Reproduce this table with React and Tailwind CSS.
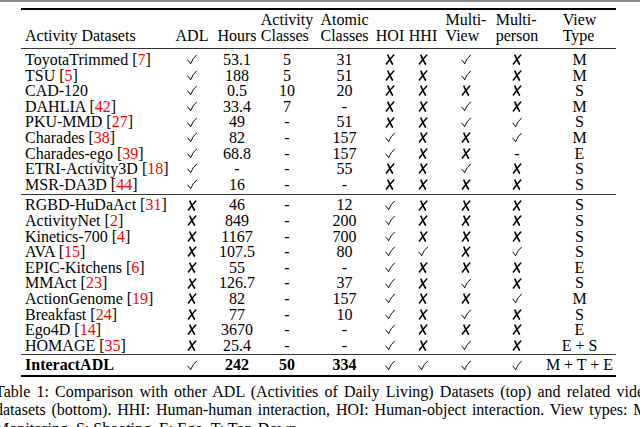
import React from 'react'

const Y = 'yes'
const N = 'no'

const top = [
  ['ToyotaTrimmed', '7', Y, '53.1', '5', '31', N, N, Y, N, 'M'],
  ['TSU', '5', Y, '188', '5', '51', N, N, Y, N, 'M'],
  ['CAD-120', null, Y, '0.5', '10', '20', N, N, N, N, 'S'],
  ['DAHLIA', '42', Y, '33.4', '7', '-', N, N, Y, N, 'M'],
  ['PKU-MMD', '27', Y, '49', '-', '51', N, N, Y, Y, 'S'],
  ['Charades', '38', Y, '82', '-', '157', Y, N, N, Y, 'M'],
  ['Charades-ego', '39', Y, '68.8', '-', '157', Y, N, N, '-', 'E'],
  ['ETRI-Activity3D', '18', Y, '-', '-', '55', N, N, Y, N, 'S'],
  ['MSR-DA3D', '44', Y, '16', '-', '-', N, N, N, N, 'S'],
]

const bottom = [
  ['RGBD-HuDaAct', '31', N, '46', '-', '12', Y, N, N, N, 'S'],
  ['ActivityNet', '2', N, '849', '-', '200', Y, N, N, N, 'S'],
  ['Kinetics-700', '4', N, '1167', '-', '700', Y, N, N, N, 'S'],
  ['AVA', '15', N, '107.5', '-', '80', Y, Y, N, Y, 'S'],
  ['EPIC-Kitchens', '6', N, '55', '-', '-', Y, N, N, N, 'E'],
  ['MMAct', '23', N, '126.7', '-', '37', Y, N, Y, N, 'S'],
  ['ActionGenome', '19', N, '82', '-', '157', Y, N, N, Y, 'M'],
  ['Breakfast', '24', N, '77', '-', '10', Y, N, Y, N, 'S'],
  ['Ego4D', '14', N, '3670', '-', '-', Y, N, N, N, 'E'],
  ['HOMAGE', '35', N, '25.4', '-', '-', Y, N, Y, N, 'E + S'],
]

const cols = 'grid grid-cols-[149px_44px_46px_54px_61px_30px_36px_50px_52px_73px]'

function Check() {
  return (
    <svg width="10" height="11" viewBox="0 0 10 11" className="inline-block">
      <path d="M0.8 6.2 Q2.2 6.6 3.6 9.8 Q5.6 4.2 9.6 1" fill="none" stroke="#000" strokeWidth="0.95" strokeLinecap="round" />
    </svg>
  )
}

function Cross() {
  return (
    <svg width="10" height="11" viewBox="0 0 10 11" className="inline-block">
      <path d="M3 1.2 Q4.6 5.5 7.4 10" fill="none" stroke="#000" strokeWidth="1.7" strokeLinecap="round" />
      <path d="M8.8 1 Q5 5 1.4 10" fill="none" stroke="#000" strokeWidth="1.5" strokeLinecap="round" />
    </svg>
  )
}

function Cell({ v, bold }) {
  if (v === Y || v === N) {
    return (
      <div className="flex items-center justify-center">
        {v === Y ? <Check /> : <Cross />}
      </div>
    )
  }
  return <div className={'text-center ' + (bold ? 'font-bold' : '')}>{v}</div>
}

function Row({ r, bold }) {
  const [name, cite, ...rest] = r
  return (
    <div className={cols + ' h-[15.6px] leading-[15.6px]'}>
      <div className={'pl-[4px] whitespace-nowrap ' + (bold ? 'font-bold' : '')}>
        {name}
        {cite && (
          <>
            {' '}[<span className="text-[#ff0000]">{cite}</span>]
          </>
        )}
      </div>
      {rest.map((v, i) => (
        <Cell key={i} v={v} bold={bold && i > 0 && i < 4} />
      ))}
    </div>
  )
}

function Head({ a, b }) {
  return (
    <div className="text-center">
      <div className="inline-block text-left">
        {a && <div>{a}</div>}
        <div>{b}</div>
      </div>
    </div>
  )
}

export default function App() {
  return (
    <div className="w-[640px] h-[427px] overflow-hidden bg-white text-black font-['Liberation_Serif',serif] text-[16px]">
      <div className="h-[2px] bg-[#8c8c8c]" />
      <div className="ml-[21px] w-[595px] mt-[6px] border-t-2 border-b-2 border-black">
        <div className={cols + ' items-end leading-[16px] pt-[2px] pb-[4px] border-b border-[#333]'}>
          <div className="pl-[4px]">Activity Datasets</div>
          <Head b="ADL" />
          <Head b="Hours" />
          <Head a="Activity" b="Classes" />
          <Head a="Atomic" b="Classes" />
          <Head b="HOI" />
          <Head b="HHI" />
          <Head a="Multi-" b="View" />
          <Head a="Multi-" b="person" />
          <Head a="View" b="Type" />
        </div>
        <div className="pt-[3px] pb-[2px] border-b border-[#333]">
          {top.map(r => <Row key={r[0]} r={r} />)}
        </div>
        <div className="pt-[2px] pb-[1px] border-b border-[#333]">
          {bottom.map(r => <Row key={r[0]} r={r} />)}
        </div>
        <div className="pt-[2px] pb-[2px]">
          <Row r={['InteractADL', null, Y, '242', '50', '334', Y, Y, Y, Y, 'M + T + E']} bold />
        </div>
      </div>
      <p className="ml-[-5px] w-[657px] mt-[6px] leading-[18.5px] text-justify">
        Table 1: Comparison with other ADL (Activities of Daily Living) Datasets (top) and related video
        datasets (bottom). HHI: Human-human interaction, HOI: Human-object interaction. View types: M:
        Monitoring, S: Shooting, E: Ego, T: Top-Down.
      </p>
    </div>
  )
}
